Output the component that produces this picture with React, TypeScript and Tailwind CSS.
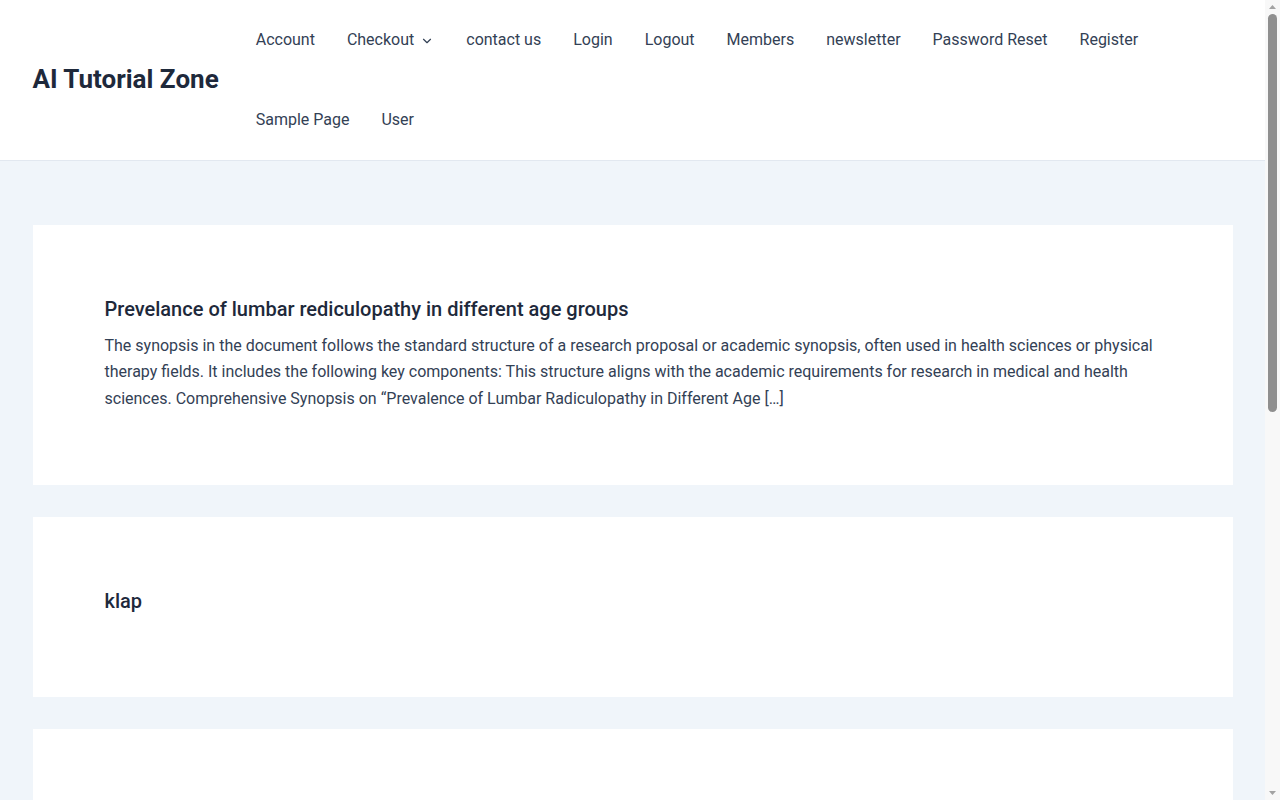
import React from 'react';
import { ChevronDown } from 'lucide-react';

const NAV = [
  { label: 'Account' },
  { label: 'Checkout', sub: true },
  { label: 'contact us' },
  { label: 'Login' },
  { label: 'Logout' },
  { label: 'Members' },
  { label: 'newsletter' },
  { label: 'Password Reset' },
  { label: 'Register' },
  { label: 'Sample Page' },
  { label: 'User' },
];

const POSTS = [
  {
    title: 'Prevelance of lumbar rediculopathy in different age groups',
    excerpt:
      'The synopsis in the document follows the standard structure of a research proposal or academic synopsis, often used in health sciences or physical therapy fields. It includes the following key components: This structure aligns with the academic requirements for research in medical and health sciences. Comprehensive Synopsis on \u201cPrevalence of Lumbar Radiculopathy in Different Age [\u2026]',
  },
  { title: 'klap' },
  {
    title: 'How to write a research synopsis with AI tools',
    excerpt:
      'A short guide covering the outline, objectives, methodology and references sections that most universities expect in a synopsis, with tips for drafting each part quickly and reviewing it carefully before submission. [\u2026]',
  },
  { title: 'Hello world!' },
];

// window scrollbar as it shows in the screenshot
const Scrollbar = () => (
  <div className="flex w-[15px] shrink-0 flex-col items-center bg-[#f8f8f8]">
    <svg width="15" height="14" viewBox="0 0 15 14" className="shrink-0">
      <path d="M4 9 L7.5 5 L11 9 Z" fill="#a3a3a3" />
    </svg>
    <div className="h-[398px] w-[9px] shrink-0 rounded-full bg-[#8f8f8f]" />
    <div className="flex-1" />
    <svg width="15" height="14" viewBox="0 0 15 14" className="shrink-0">
      <path d="M4 5 L7.5 9 L11 5 Z" fill="#a3a3a3" />
    </svg>
  </div>
);

export default function App() {
  return (
    <div className="flex h-screen overflow-hidden font-['Roboto',sans-serif] text-[#334155]">
      <div className="flex-1 overflow-hidden bg-[#f0f5fa]">
        <header className="border-b border-[#e2e8f0] bg-white">
          <div className="mx-auto flex w-[1200px] items-center">
            <a className="-mt-[2px] mr-[21px] shrink-0 text-[26px] font-bold leading-none text-[#1e293b]">
              AI Tutorial Zone
            </a>
            <nav className="flex flex-1 flex-wrap">
              {NAV.map((item) => (
                <a key={item.label} className="flex h-20 items-center px-4 text-base text-[#334155]">
                  {item.label}
                  {item.sub && <ChevronDown size={14} strokeWidth={2} className="ml-[6px] mt-[1px]" />}
                </a>
              ))}
            </nav>
          </div>
        </header>

        <main className="mx-auto flex w-[1200px] flex-col gap-8 pb-16 pt-16">
          {POSTS.map((post) => (
            <article key={post.title} className="bg-white p-[72px]">
              <h2 className="mb-3 text-[20px] font-medium leading-6 text-[#1e293b]">{post.title}</h2>
              {post.excerpt && (
                <p className="mb-[1px] mt-[2px] text-base leading-[26.4px] text-[#334155]">{post.excerpt}</p>
              )}
            </article>
          ))}
        </main>

        <footer className="border-t border-[#e2e8f0] bg-white">
          <div className="mx-auto flex h-[270px] w-[1200px] items-center justify-center text-sm text-[#334155]">
            Copyright © 2025 AI Tutorial Zone | Powered by Astra WordPress Theme
          </div>
        </footer>
      </div>
      <Scrollbar />
    </div>
  );
}
